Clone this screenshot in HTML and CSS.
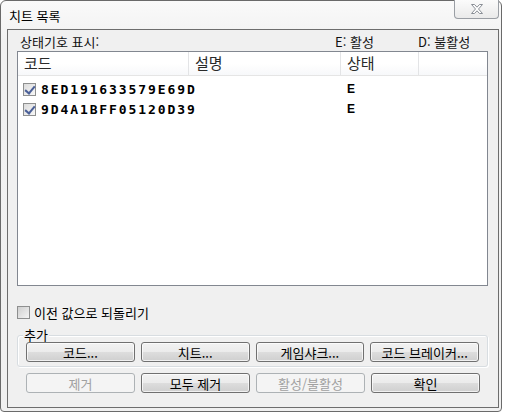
FILE: index.html
```html
<!DOCTYPE html>
<html lang="ko">
<head>
<meta charset="utf-8">
<title>치트 목록</title>
<link rel="stylesheet" href="styles.css">
</head>
<body>
<div class="window">
  <div class="titlebar">
    <span class="title">치트 목록</span>
    <button class="close" aria-label="닫기">
      <svg width="14" height="12" viewBox="0 0 14 12">
        <path d="M1.5 1.5h3l2.5 2.7 2.5-2.7h3l-4 4.5 4 4.5h-3l-2.5-2.7-2.5 2.7h-3l4-4.5z" fill="#fff" stroke="#8a8f96" stroke-width="1" stroke-linejoin="round"/>
      </svg>
    </button>
  </div>
  <div class="client">
    <div class="legend">
      <span class="legend-label">상태기호 표시:</span>
      <span class="legend-e">E: 활성</span>
      <span class="legend-d">D: 불활성</span>
    </div>
    <div class="listview">
      <div class="lv-header">
        <div class="col col-code">코드</div>
        <div class="col col-desc">설명</div>
        <div class="col col-state">상태</div>
        <div class="col col-rest"></div>
      </div>
      <div class="lv-row">
        <div class="cell cell-code"><span class="chk checked"></span><span class="code">8ED191633579E69D</span></div>
        <div class="cell cell-desc"></div>
        <div class="cell cell-state">E</div>
      </div>
      <div class="lv-row">
        <div class="cell cell-code"><span class="chk checked"></span><span class="code">9D4A1BFF05120D39</span></div>
        <div class="cell cell-desc"></div>
        <div class="cell cell-state">E</div>
      </div>
    </div>
    <label class="revert"><span class="chk plain"></span>이전 값으로 되돌리기</label>
    <div class="group">
      <span class="group-label">추가</span>
      <div class="btn-row">
        <button class="btn">코드...</button>
        <button class="btn">치트...</button>
        <button class="btn">게임샤크...</button>
        <button class="btn">코드 브레이커...</button>
      </div>
    </div>
    <div class="btn-row bottom-row">
      <button class="btn" disabled>제거</button>
      <button class="btn">모두 제거</button>
      <button class="btn" disabled>활성/불활성</button>
      <button class="btn">확인</button>
    </div>
  </div>
</div>
</body>
</html>
```

FILE: styles.css
```css
* { box-sizing: border-box; }

html, body {
  margin: 0;
  background: #ffffff;
}

body {
  font-family: "Noto Sans CJK KR", "Noto Sans", sans-serif;
  font-size: 13px;
  color: #000;
  width: 506px;
  height: 413px;
  overflow: hidden;
}

.window {
  width: 502px;
  height: 412px;
  border: 1px solid #6a6a6a;
  border-radius: 6px 6px 4px 4px;
  background: linear-gradient(#fafafa, #f1f1f1 40px, #f0f0f0);
  display: flex;
  flex-direction: column;
}

.titlebar {
  height: 28px;
  position: relative;
  padding: 5px 0 0 8px;
  flex: none;
}

.title {
  font-size: 13px;
  line-height: 17px;
  color: #000;
}

.close {
  position: absolute;
  top: -1px;
  right: 2px;
  width: 45px;
  height: 19px;
  border: 1px solid #9a9ea4;
  border-top: none;
  border-radius: 0 0 4px 4px;
  background: linear-gradient(#fbfbfb, #eaeaea);
  padding: 0;
  display: flex;
  align-items: center;
  justify-content: center;
}

.client {
  flex: 1;
  margin: 0 2px 3px 6px;
  border: 1px solid #6d6d6d;
  background: #f0f0f0;
  padding: 3px 9px 0 9px;
  display: flex;
  flex-direction: column;
}

.legend {
  display: flex;
  height: 18px;
  line-height: 18px;
  padding-left: 3px;
  color: #111;
}

.legend-label { flex: 1; }
.legend-e { width: 83px; }
.legend-d { width: 71px; }

.listview {
  height: 235px;
  margin-right: 1px;
  border: 1px solid #828790;
  background: #fff;
}

.lv-header {
  display: flex;
  height: 24px;
  border-bottom: 1px solid #e5e5e5;
  background: linear-gradient(#ffffff, #ffffff 50%, #f7f8fa);
}

.col {
  height: 100%;
  line-height: 22px;
  padding-left: 6px;
  border-right: 1px solid #e3e4e6;
  font-size: 15px;
  color: #2a2a2a;
}

.col-code { width: 171px; }
.col-desc { width: 152px; }
.col-state { width: 78px; }
.col-rest { flex: 1; border-right: none; }

.lv-row {
  display: flex;
  height: 20px;
  align-items: center;
}

.lv-header + .lv-row { margin-top: 3px; }

.cell { height: 100%; display: flex; align-items: center; }
.cell-code { width: 171px; padding-left: 5px; }
.cell-desc { width: 152px; }
.cell-state {
  width: 78px;
  padding-left: 6px;
  font-family: "Liberation Sans", sans-serif;
  font-weight: bold;
  font-size: 12px;
}

.code {
  font-family: "DejaVu Sans Mono", monospace;
  font-weight: bold;
  font-size: 13px;
  letter-spacing: 1.9px;
  margin-left: 5px;
}

.chk {
  width: 13px;
  height: 13px;
  border: 1px solid #8e8f8f;
  background: linear-gradient(135deg, #dcdcdc, #f7f7f7);
  display: inline-block;
  position: relative;
  flex: none;
}

.chk.checked::after {
  content: "";
  position: absolute;
  left: 3px;
  top: 0px;
  width: 4px;
  height: 8px;
  border: solid #4a5f97;
  border-width: 0 2px 2px 0;
  transform: rotate(40deg);
}

.revert {
  display: flex;
  align-items: center;
  gap: 4px;
  margin-top: 20px;
  height: 13px;
  line-height: 13px;
}

.revert .chk { background: linear-gradient(135deg, #cfcfcf, #f4f4f4); }

.group {
  position: relative;
  margin: 16px 1px 0 0;
  padding: 6px 8px 4px 8px;
  border: 1px solid #d8dde1;
  border-radius: 3px;
  box-shadow: inset 1px 1px 0 #fff, 1px 1px 0 #fff;
}

.group-label {
  position: absolute;
  left: 5px;
  top: -8px;
  padding: 0 1px;
  background: #f0f0f0;
  line-height: 14px;
}

.btn-row {
  display: flex;
  gap: 6px;
}

.btn {
  width: 109px;
  height: 20px;
  padding: 0;
  border: 1px solid #707070;
  border-radius: 3px;
  background: linear-gradient(#f2f2f2, #ebebeb 50%, #dddddd 51%, #cfcfcf);
  font-family: "Noto Sans CJK KR", "Noto Sans", sans-serif;
  font-size: 13px;
  line-height: 17px;
  color: #000;
  box-shadow: inset 0 0 0 1px rgba(255, 255, 255, 0.7);
}

.btn:disabled {
  border-color: #adb2b5;
  background: #f4f4f4;
  color: #a0a0a0;
  box-shadow: none;
}

.bottom-row {
  margin-top: 6px;
  padding-left: 9px;
}
```
